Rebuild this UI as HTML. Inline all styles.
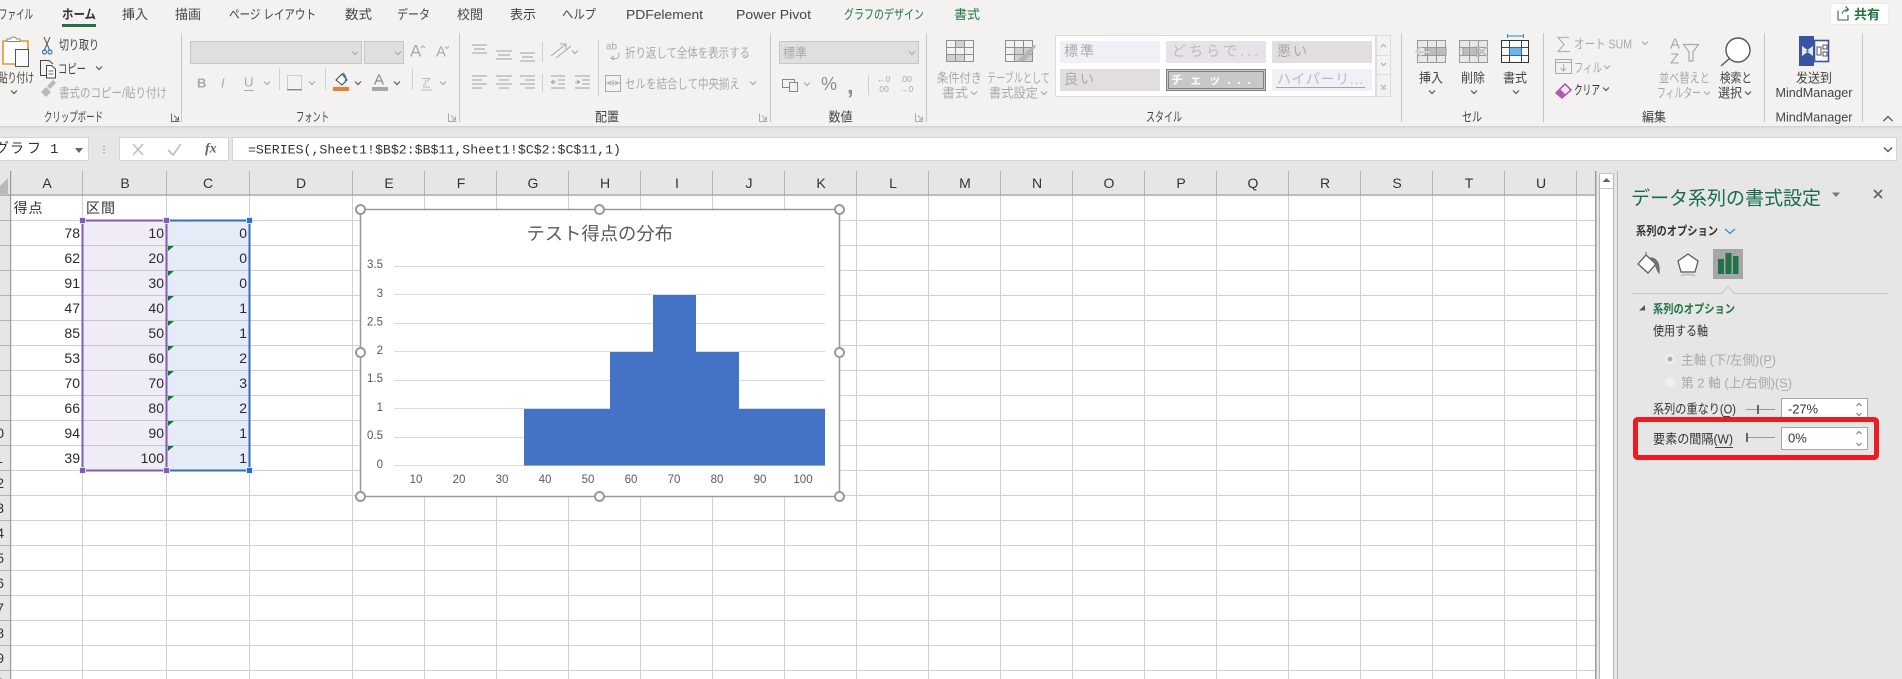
<!DOCTYPE html>
<html lang="ja"><head><meta charset="utf-8"><title>Excel</title>
<style>
html,body{margin:0;padding:0;background:#e6e6e6;overflow:hidden}
svg{display:block;font-size:13px}
text{font-family:"Liberation Sans","Noto Sans CJK JP",sans-serif;dominant-baseline:central;fill:#444}
.g{fill:#a9a9a9}
.d{fill:#333}
.n{font-size:14px;fill:#2a2a2a;text-anchor:end}
.c{font-size:14px;fill:#333;text-anchor:middle}
.y{font-size:11.5px;fill:#595959;text-anchor:end}
.x{font-size:11.5px;fill:#595959;text-anchor:middle}
.gr{fill:#217346}
.hd{fill:#fff;stroke:#999;stroke-width:2}
</style></head><body>
<svg xmlns="http://www.w3.org/2000/svg" width="1902" height="679" viewBox="0 0 1902 679">
<defs>
<path id="ch" d="M-3-1.5L0 1.5L3-1.5" fill="none" stroke="#555" stroke-width="1.2"/>
<path id="cg" d="M-3-1.5L0 1.5L3-1.5" fill="none" stroke="#aaa" stroke-width="1.2"/>
<path id="tri" d="M0 0H6L0 5Z" fill="#0b7d1f"/>
</defs>
<rect width="1902" height="679" fill="#e6e6e6"/>

<!-- ribbon -->
<rect width="1902" height="126" fill="#f3f2f1"/>
<rect y="126" width="1902" height="1" fill="#d4d4d4"/>
<rect y="127" width="1902" height="1" fill="#dcdcdc"/>
<rect y="128" width="1902" height="1" fill="#e1e1e1"/>

<!-- tabs -->
<text x="-1" y="14.5" textLength="34" lengthAdjust="spacingAndGlyphs">ファイル</text>
<text x="62" y="14.5" textLength="34" lengthAdjust="spacingAndGlyphs" font-weight="700" class="d">ホーム</text>
<rect x="62" y="24" width="34" height="3" fill="#217346"/>
<text x="122" y="14.5" textLength="26" lengthAdjust="spacingAndGlyphs">挿入</text>
<text x="175" y="14.5" textLength="26" lengthAdjust="spacingAndGlyphs">描画</text>
<text x="229" y="14.5" textLength="87" lengthAdjust="spacingAndGlyphs">ページ レイアウト</text>
<text x="345" y="14.5" textLength="27" lengthAdjust="spacingAndGlyphs">数式</text>
<text x="397" y="14.5" textLength="33" lengthAdjust="spacingAndGlyphs">データ</text>
<text x="457" y="14.5" textLength="26" lengthAdjust="spacingAndGlyphs">校閲</text>
<text x="510" y="14.5" textLength="26" lengthAdjust="spacingAndGlyphs">表示</text>
<text x="562" y="14.5" textLength="34" lengthAdjust="spacingAndGlyphs">ヘルプ</text>
<text x="626" y="14.5" textLength="77" lengthAdjust="spacingAndGlyphs">PDFelement</text>
<text x="736" y="14.5" textLength="75" lengthAdjust="spacingAndGlyphs">Power Pivot</text>
<text x="844" y="14.5" textLength="80" lengthAdjust="spacingAndGlyphs" class="gr">グラフのデザイン</text>
<text x="954" y="14.5" textLength="26" lengthAdjust="spacingAndGlyphs" class="gr">書式</text>
<!-- share -->
<rect x="1830.5" y="3.5" width="58" height="21" rx="2" fill="#fff" stroke="#ebebeb"/>
<path d="M1838 10.5V20H1848V15M1842 14C1843 11 1845 9.5 1848 9.5M1845.5 6.5L1848.5 9.5L1845.5 12" fill="none" stroke="#217346" stroke-width="1.1"/>
<text x="1854" y="14.5" textLength="26" lengthAdjust="spacingAndGlyphs" class="gr" font-weight="700">共有</text>

<!-- separators -->
<path d="M181.5 33V122M459.5 33V122M770.5 33V122M926.5 33V122M1401.5 33V122M1543.5 33V122M1764.5 33V122M1862.5 33V122" stroke="#c8c6c4" fill="none"/>

<!-- group labels -->
<text x="44" y="117" textLength="59" lengthAdjust="spacingAndGlyphs">クリップボード</text>
<text x="296" y="117" textLength="33" lengthAdjust="spacingAndGlyphs">フォント</text>
<text x="595" y="117" textLength="24" lengthAdjust="spacingAndGlyphs">配置</text>
<text x="828.5" y="117" textLength="24" lengthAdjust="spacingAndGlyphs">数値</text>
<text x="1146" y="117" textLength="36" lengthAdjust="spacingAndGlyphs">スタイル</text>
<text x="1462" y="117" textLength="20" lengthAdjust="spacingAndGlyphs">セル</text>
<text x="1642" y="117" textLength="24" lengthAdjust="spacingAndGlyphs">編集</text>
<text x="1775.5" y="117" textLength="77" lengthAdjust="spacingAndGlyphs">MindManager</text>
<!-- launchers -->
<path d="M171.5 113.5V121.5H179.5M174 115.5L178.5 120M178.5 116.5V120H175" fill="none" stroke="#666"/>
<path d="M448.5 113.5V121.5H456.5M451 115.5L455.5 120M455.5 116.5V120H452" fill="none" stroke="#aaa"/>
<path d="M759.5 113.5V121.5H767.5M762 115.5L766.5 120M766.5 116.5V120H763" fill="none" stroke="#aaa"/>
<path d="M915.5 113.5V121.5H923.5M918 115.5L922.5 120M922.5 116.5V120H919" fill="none" stroke="#aaa"/>
<path d="M1883.5 121L1888 116.5L1892.5 121" fill="none" stroke="#555" stroke-width="1.3"/>

<!-- clipboard -->
<path d="M3 41H28V64H3Z" fill="#fff" stroke="#e8952c" stroke-width="1.6"/>
<path d="M7 41.5V39H10.5C11 36.5 16 36.5 16.5 39H20V41.5Z" fill="#fff" stroke="#888" stroke-width=".9"/>
<rect x="15.5" y="49.5" width="13" height="17" fill="#fbfbfb" stroke="#555"/>
<text x="-1" y="78" textLength="35" lengthAdjust="spacingAndGlyphs">貼り付け</text>
<use href="#ch" x="14" y="92"/>
<path d="M44 37L50 51M50 37L44 51" stroke="#555" fill="none"/>
<circle cx="44.5" cy="52" r="2" fill="none" stroke="#2f7fc1" stroke-width="1.2"/><circle cx="50" cy="52" r="2" fill="none" stroke="#2f7fc1" stroke-width="1.2"/>
<text x="59" y="45" textLength="40" lengthAdjust="spacingAndGlyphs">切り取り</text>
<path d="M46 75.5H40.5V60.5H49L53 64" fill="none" stroke="#444"/><path d="M46.5 65.5H51.5L55.5 69V78H46.5Z" fill="#fff" stroke="#444"/><path d="M48.5 71H53.5M48.5 74H53.5" stroke="#666"/>
<text x="58" y="69" textLength="28" lengthAdjust="spacingAndGlyphs">コピー</text>
<use href="#ch" x="99" y="68"/>
<path d="M41 92L46 87L51 92L46 97ZM47 86L53 80L56 83L50 89Z" fill="#b9b9b9"/>
<text x="59" y="93" textLength="108" lengthAdjust="spacingAndGlyphs" class="g">書式のコピー/貼り付け</text>

<!-- font -->
<rect x="190.5" y="41.5" width="171" height="22" fill="#e1dfdd" stroke="#c8c6c4"/>
<use href="#cg" x="355" y="53"/>
<rect x="364.5" y="41.5" width="39" height="22" fill="#e1dfdd" stroke="#c8c6c4"/>
<use href="#cg" x="398" y="53"/>
<text x="410" y="51" font-size="17" class="g" textLength="11">A</text>
<path d="M421 48L423 46L425 48" fill="none" stroke="#aaa"/>
<text x="436" y="52" font-size="15" class="g" textLength="9">A</text>
<path d="M445 46.5L447 48.5L449 46.5" fill="none" stroke="#aaa"/>
<text x="197" y="83" font-size="13" font-weight="700" class="g">B</text>
<text x="221" y="83" font-size="13" font-style="italic" class="g">I</text>
<text x="244" y="82" font-size="13" class="g">U</text>
<rect x="244" y="90" width="10" height="1" fill="#aaa"/>
<use href="#cg" x="267" y="83"/>
<rect x="287.5" y="75.5" width="14" height="14" fill="none" stroke="#aaa" stroke-dasharray="1 1"/>
<rect x="287" y="89" width="15" height="1.4" fill="#888"/>
<use href="#cg" x="312" y="83"/>
<path d="M279.5 68V90M325.5 68V90M412.5 68V90" stroke="#d2d0ce"/>
<path d="M336 80L342 74L347 80L342 85Z" fill="#fff" stroke="#444"/><path d="M345 82C347 78 345 75 343 73" fill="none" stroke="#2f7fc1" stroke-width="1.4"/>
<rect x="333" y="87" width="16" height="4" fill="#ed7d31"/>
<use href="#ch" x="358" y="83"/>
<text x="374" y="80" font-size="15" style="fill:#888">A</text>
<rect x="372" y="87" width="16" height="4" fill="#a6a6a6"/>
<use href="#ch" x="397" y="83"/>
<text x="421" y="83" font-size="10" class="g">ア</text>
<path d="M421 90H432M423 87H430" stroke="#bbb"/>
<use href="#cg" x="443" y="83"/>

<!-- alignment -->
<path d="M472 45H487M474 49H485M472 53H487M496 51H512M498 55H510M496 59H512M520 53H535M522 57H533M520 61H535" stroke="#a0a0a0" fill="none"/>
<path d="M542.5 42V62M542.5 74V92M598.5 40V96" stroke="#d2d0ce"/>
<path d="M551 56L566 44M556 58L571 46M566 44H560M566 44V50" stroke="#aaa" fill="none"/>
<use href="#cg" x="575" y="52"/>
<path d="M472 76H487M472 80H482M472 84H487M472 88H482M496 76H512M499 80H509M496 84H512M499 88H509M520 76H535M525 80H535M520 84H535M525 88H535" stroke="#a0a0a0" fill="none"/>
<path d="M551 76H565M558 80H565M558 84H565M551 88H565M556 82H551M551 82L554 80M551 82L554 84M575 76H590M582 80H590M582 84H590M575 88H590M575 82H580M580 82L577 80M580 82L577 84" stroke="#a0a0a0" fill="none"/>
<text x="606" y="47" font-size="10" class="g">ab</text>
<path d="M618 53C621 57 617 60 611 58L614 56M611 58L614 60" stroke="#aaa" fill="none"/>
<text x="625" y="53" textLength="125" lengthAdjust="spacingAndGlyphs" class="g">折り返して全体を表示する</text>
<rect x="605.5" y="75.5" width="15" height="16" fill="#f3f2f1" stroke="#aaa"/>
<path d="M605 83H620M613 80V86M608 83L611 81M608 83L611 85M618 83L615 81M618 83L615 85" stroke="#aaa" fill="none"/>
<text x="625" y="84" textLength="115" lengthAdjust="spacingAndGlyphs" class="g">セルを結合して中央揃え</text>
<use href="#cg" x="753" y="83"/>

<!-- number -->
<rect x="779.5" y="41.5" width="139" height="22" fill="#e1dfdd" stroke="#c8c6c4"/>
<text x="783" y="53" textLength="24" lengthAdjust="spacingAndGlyphs" class="g">標準</text>
<use href="#cg" x="912" y="53"/>
<rect x="782.5" y="79.5" width="12" height="8" fill="none" stroke="#888"/><rect x="789.5" y="82.5" width="8" height="9" fill="#f3f2f1" stroke="#888"/>
<use href="#cg" x="807" y="84"/>
<text x="821" y="84" font-size="18" style="fill:#8c8c8c">%</text>
<text x="847" y="86" font-size="24" font-weight="700" style="fill:#8c8c8c">,</text>
<path d="M868.5 75V95" stroke="#d2d0ce"/>
<text x="877" y="79" font-size="8.5" class="g">←0</text><text x="877" y="89" font-size="8.5" class="g">.00</text>
<text x="900" y="79" font-size="8.5" class="g">.00</text><text x="900" y="89" font-size="8.5" class="g">→0</text>

<!-- styles -->
<g fill="#d0d0d0" stroke="#8f8f8f">
<rect x="946.5" y="40.5" width="27" height="21" fill="#f3f2f1"/>
<rect x="955.5" y="40.5" width="9" height="7"/><rect x="946.5" y="54.5" width="18" height="7"/><rect x="955.5" y="47.5" width="18" height="7" fill="#f3f2f1"/>
<path d="M946.5 47.5H973.5M946.5 54.5H973.5M955.5 40.5V61.5M964.5 40.5V61.5" fill="none"/>
<rect x="1005.5" y="40.5" width="27" height="21" fill="#f3f2f1"/>
<rect x="1014.5" y="47.5" width="18" height="14"/>
<path d="M1005.5 47.5H1032.5M1005.5 54.5H1032.5M1014.5 40.5V61.5M1023.5 40.5V61.5" fill="none"/>
</g>
<path d="M1018 60L1022 56L1034 45L1036 46L1026 60L1020 62Z" fill="#b5b5b5"/>
<text x="937" y="78" textLength="45" lengthAdjust="spacingAndGlyphs" class="g">条件付き</text>
<text x="942" y="93" textLength="26" lengthAdjust="spacingAndGlyphs" class="g">書式</text><use href="#cg" x="974" y="93"/>
<text x="987" y="78" textLength="63" lengthAdjust="spacingAndGlyphs" class="g">テーブルとして</text>
<text x="989" y="93" textLength="49" lengthAdjust="spacingAndGlyphs" class="g">書式設定</text><use href="#cg" x="1044" y="93"/>
<rect x="1055.5" y="35.5" width="320" height="61" fill="#fff" stroke="#dcdcdc"/>
<rect x="1060" y="41" width="100" height="22" fill="#f3eff7"/>
<rect x="1166" y="41" width="100" height="22" fill="#e6e2e8"/>
<rect x="1272" y="41" width="100" height="22" fill="#e1dde1"/>
<rect x="1060" y="69" width="100" height="22" fill="#e1dde1"/>
<rect x="1166.5" y="69.5" width="99" height="21" fill="#c8c8c8" stroke="#808080" stroke-width="1"/>
<rect x="1168.5" y="71.5" width="95" height="17" fill="#c8c8c8" stroke="#808080" stroke-width="1"/>
<rect x="1272" y="69" width="100" height="22" fill="#f3eff7"/>
<text x="1064" y="51" textLength="30" lengthAdjust="spacing" font-size="14" class="g">標準</text>
<text x="1172" y="51" textLength="86" lengthAdjust="spacing" font-size="14" style="fill:#bbb">どちらで...</text>
<text x="1277" y="51" textLength="30" lengthAdjust="spacing" font-size="14" class="g">悪い</text>
<text x="1064" y="79" textLength="30" lengthAdjust="spacing" font-size="14" class="g">良い</text>
<text x="1171" y="80" textLength="80" lengthAdjust="spacing" font-size="12" font-weight="700" style="fill:#fff">チェッ...</text>
<text x="1277" y="79" textLength="86" lengthAdjust="spacing" font-size="14" style="fill:#bbb">ハイパーリ...</text>
<rect x="1276" y="87" width="89" height="1" fill="#a89fb0"/>
<g fill="#f3f2f1" stroke="#dcdcdc"><rect x="1376.5" y="35.5" width="14" height="20"/><rect x="1376.5" y="55.5" width="14" height="19"/><rect x="1376.5" y="74.5" width="14" height="22"/></g>
<path d="M1381 47L1383.5 44.5L1386 47M1381 63L1383.5 65.5L1386 63M1381 85L1383.5 87.5L1386 85M1381 89H1386" fill="none" stroke="#aaa"/>

<!-- cells -->
<g stroke="#999" fill="#e8e8e8">
<rect x="1417.5" y="40.5" width="28" height="22"/>
<rect x="1425" y="47.5" width="21" height="8" fill="#bdbdbd"/>
<path d="M1417.5 47.5H1445.5M1417.5 55.5H1445.5M1427.5 40.5V62.5M1436.5 40.5V62.5" fill="none"/>
<rect x="1459.5" y="40.5" width="28" height="22"/>
<rect x="1463" y="47.5" width="14" height="8" fill="#bdbdbd"/>
<path d="M1459.5 47.5H1487.5M1459.5 55.5H1487.5M1469.5 40.5V62.5M1478.5 40.5V62.5" fill="none"/>
</g>
<path d="M1430 52H1417M1421 47L1416 51.5L1421 56" fill="none" stroke="#d0d0d0" stroke-width="2"/>
<path d="M1476 46L1488 57M1488 46L1476 57" stroke="#bbb" stroke-width="1.6"/>
<rect x="1501.5" y="40.5" width="27" height="22" fill="#fafafa" stroke="#333"/>
<rect x="1509.5" y="47.5" width="12" height="8" fill="#74b0e6" stroke="#1b6db8"/>
<path d="M1501.5 47.5H1509.5M1521.5 47.5H1528.5M1501.5 55.5H1509.5M1521.5 55.5H1528.5M1509.5 40.5V47.5M1509.5 55.5V62.5M1521.5 40.5V47.5M1521.5 55.5V62.5" fill="none" stroke="#444"/>
<path d="M1507.5 36H1523.5M1507.5 34V38M1523.5 34V38" stroke="#1f86d1" fill="none"/>
<text x="1419" y="78" textLength="24" lengthAdjust="spacingAndGlyphs">挿入</text><use href="#ch" x="1432" y="92"/>
<text x="1461" y="78" textLength="24" lengthAdjust="spacingAndGlyphs">削除</text><use href="#ch" x="1474" y="92"/>
<text x="1503" y="78" textLength="24" lengthAdjust="spacingAndGlyphs">書式</text><use href="#ch" x="1516" y="92"/>

<!-- edit -->
<path d="M1569 37.5H1558L1564 44.5L1558 51.5H1570" fill="none" stroke="#b5b5b5" stroke-width="1.3"/>
<text x="1574" y="44" textLength="58" lengthAdjust="spacingAndGlyphs" class="g">オート SUM</text><use href="#cg" x="1645" y="43"/>
<rect x="1555.5" y="59.5" width="16" height="14" fill="#f3f2f1" stroke="#aaa"/><path d="M1555.5 62.5H1571.5M1563.5 64V71M1560.5 68L1563.5 71L1566.5 68" stroke="#aaa" fill="none"/>
<text x="1574" y="68" textLength="28" lengthAdjust="spacingAndGlyphs" class="g">フィル</text><use href="#cg" x="1607" y="67"/>
<path d="M1556 93L1565 84L1571 90L1562 98Z" fill="#f3e6f4" stroke="#a548a6" stroke-width="1.4"/><path d="M1556 93L1560 89L1565 94L1562 98Z" fill="#b45ab5"/>
<text x="1574" y="90" textLength="26" lengthAdjust="spacingAndGlyphs" class="d">クリア</text><use href="#ch" x="1606" y="89"/>
<text x="1670" y="44" font-size="15" class="g">A</text><text x="1670" y="59" font-size="15" class="g">Z</text>
<path d="M1683.5 44.5H1698.5L1693 52V61L1689 61V52Z" fill="none" stroke="#aaa" stroke-width="1.2"/>
<text x="1659" y="78" textLength="51" lengthAdjust="spacingAndGlyphs" class="g">並べ替えと</text>
<text x="1657" y="93" textLength="44" lengthAdjust="spacingAndGlyphs" class="g">フィルター</text><use href="#cg" x="1707" y="93"/>
<circle cx="1738" cy="50" r="12" fill="#fff" stroke="#555" stroke-width="1.4"/>
<path d="M1729.5 58.5L1721 66" stroke="#555" stroke-width="1.4"/>
<text x="1720" y="78" textLength="32" lengthAdjust="spacingAndGlyphs">検索と</text>
<text x="1718" y="93" textLength="24" lengthAdjust="spacingAndGlyphs">選択</text><use href="#ch" x="1748" y="93"/>

<!-- mindmanager -->
<rect x="1799" y="36" width="15" height="30" fill="#3a53a4"/>
<rect x="1814.5" y="40.5" width="14" height="21" fill="#fff" stroke="#3a53a4" stroke-width="1.6"/>
<path d="M1802 46L1809 51L1802 56ZM1813 46L1806 51L1813 56Z" fill="#e6e6e6"/>
<rect x="1817" y="47" width="4" height="8" fill="none" stroke="#555"/><rect x="1823" y="45" width="4" height="4" fill="none" stroke="#555"/><rect x="1823" y="52" width="4" height="4" fill="none" stroke="#555"/>
<text x="1796" y="78" textLength="36" lengthAdjust="spacingAndGlyphs">发送到</text>
<text x="1775.5" y="92.5" textLength="77" lengthAdjust="spacingAndGlyphs">MindManager</text>

<!-- formula bar -->
<rect x="-2" y="137.5" width="90.5" height="23" fill="#fff" stroke="#d4d4d4"/>
<text x="-5 10 27 42 50" y="150" font-size="14" style="font-family:'Liberation Mono','Noto Sans CJK JP',monospace;fill:#333">グラフ 1</text>
<path d="M75 148H83L79 153Z" fill="#666"/>
<path d="M104 146V147M104 149V150M104 152V153" stroke="#999" stroke-width="1.6"/>
<rect x="119.5" y="137.5" width="109" height="23" fill="#fff" stroke="#d4d4d4"/>
<path d="M133 144L143 155M143 144L133 155" stroke="#bdbdbd" stroke-width="1.5"/>
<path d="M168 150L173 155L181 144" fill="none" stroke="#bdbdbd" stroke-width="1.6"/>
<text x="205" y="149" font-size="14" font-style="italic" font-weight="700" style="font-family:'Liberation Serif',serif;fill:#666">fx</text>
<rect x="232.5" y="137.5" width="1664" height="23" fill="#fff" stroke="#d4d4d4"/>
<text x="248" y="150" font-size="13.2" textLength="373" lengthAdjust="spacingAndGlyphs" style="font-family:'Liberation Mono',monospace;fill:#333">=SERIES(,Sheet1!$B$2:$B$11,Sheet1!$C$2:$C$11,1)</text>
<path d="M1884 147.5L1888 151.5L1892 147.5" fill="none" stroke="#555" stroke-width="1.4"/>

<!-- column headers -->
<rect x="0" y="171" width="1595" height="24" fill="#e6e6e6"/>
<path d="M8 178V194H0V186Z" fill="#b8b8b8"/>
<path d="M10.5 171V195M82.5 171V195M166.5 171V195M249.5 171V195M352.5 171V195M424.5 171V195M496.5 171V195M568.5 171V195M640.5 171V195M712.5 171V195M784.5 171V195M856.5 171V195M928.5 171V195M1000.5 171V195M1072.5 171V195M1144.5 171V195M1216.5 171V195M1288.5 171V195M1360.5 171V195M1432.5 171V195M1504.5 171V195M1576.5 171V195" stroke="#b4b4b4"/>
<g>
<text class="c" x="47" y="183">A</text><text class="c" x="125" y="183">B</text><text class="c" x="208" y="183">C</text><text class="c" x="301" y="183">D</text><text class="c" x="389" y="183">E</text><text class="c" x="461" y="183">F</text><text class="c" x="533" y="183">G</text><text class="c" x="605" y="183">H</text><text class="c" x="677" y="183">I</text><text class="c" x="749" y="183">J</text><text class="c" x="821" y="183">K</text><text class="c" x="893" y="183">L</text><text class="c" x="965" y="183">M</text><text class="c" x="1037" y="183">N</text><text class="c" x="1109" y="183">O</text><text class="c" x="1181" y="183">P</text><text class="c" x="1253" y="183">Q</text><text class="c" x="1325" y="183">R</text><text class="c" x="1397" y="183">S</text><text class="c" x="1469" y="183">T</text><text class="c" x="1541" y="183">U</text>
</g>

<!-- grid -->
<rect x="11" y="195" width="1584" height="484" fill="#fff"/>
<path d="M82.5 195V679M166.5 195V679M249.5 195V679M352.5 195V679M424.5 195V679M496.5 195V679M568.5 195V679M640.5 195V679M712.5 195V679M784.5 195V679M856.5 195V679M928.5 195V679M1000.5 195V679M1072.5 195V679M1144.5 195V679M1216.5 195V679M1288.5 195V679M1360.5 195V679M1432.5 195V679M1504.5 195V679M1576.5 195V679M11 220.5H1595M11 245.5H1595M11 270.5H1595M11 295.5H1595M11 320.5H1595M11 345.5H1595M11 370.5H1595M11 395.5H1595M11 420.5H1595M11 445.5H1595M11 470.5H1595M11 495.5H1595M11 520.5H1595M11 545.5H1595M11 570.5H1595M11 595.5H1595M11 620.5H1595M11 645.5H1595M11 670.5H1595" stroke="#d0d0d0" fill="none"/>
<path d="M0 220.5H10M0 245.5H10M0 270.5H10M0 295.5H10M0 320.5H10M0 345.5H10M0 370.5H10M0 395.5H10M0 420.5H10M0 445.5H10M0 470.5H10M0 495.5H10M0 520.5H10M0 545.5H10M0 570.5H10M0 595.5H10M0 620.5H10M0 645.5H10M0 670.5H10" stroke="#b4b4b4" fill="none"/>
<rect x="0" y="194.5" width="1596" height="1.2" fill="#9c9c9c"/>
<rect x="10" y="171" width="1.2" height="508" fill="#9c9c9c"/>
<rect x="1595" y="171" width="1.4" height="508" fill="#9a9a9a"/>
<!-- row header digits (clipped at left edge) -->
<g>
<text x="-11.5" y="433" style="font-size:14px;fill:#333">10</text><text x="-11.5" y="458" style="font-size:14px;fill:#333">11</text><text x="-11.5" y="483" style="font-size:14px;fill:#333">12</text><text x="-11.5" y="508" style="font-size:14px;fill:#333">13</text><text x="-11.5" y="533" style="font-size:14px;fill:#333">14</text><text x="-11.5" y="558" style="font-size:14px;fill:#333">15</text><text x="-11.5" y="583" style="font-size:14px;fill:#333">16</text><text x="-11.5" y="608" style="font-size:14px;fill:#333">17</text><text x="-11.5" y="633" style="font-size:14px;fill:#333">18</text><text x="-11.5" y="658" style="font-size:14px;fill:#333">19</text><text x="-11.5" y="683" style="font-size:14px;fill:#333">20</text>
</g>

<!-- selection fills -->
<rect x="83" y="220" width="83" height="250" fill="#f0ecf6"/>
<rect x="167" y="220" width="82" height="250" fill="#e6ecf7"/>
<path d="M83 245.5H166M83 270.5H166M83 295.5H166M83 320.5H166M83 345.5H166M83 370.5H166M83 395.5H166M83 420.5H166M83 445.5H166" stroke="#c6c4cf"/>
<path d="M167 245.5H249M167 270.5H249M167 295.5H249M167 320.5H249M167 345.5H249M167 370.5H249M167 395.5H249M167 420.5H249M167 445.5H249" stroke="#c4cad5"/>
<rect x="82.5" y="220.5" width="84" height="250" fill="none" stroke="#7f5cb5" stroke-width="2"/>
<rect x="166.5" y="220.5" width="83" height="250" fill="none" stroke="#2f6ec6" stroke-width="2"/>
<path d="M82.5 220V471" stroke="#7f5cb5" stroke-width="2"/>
<path d="M166.5 220V471" stroke="#7f5cb5" stroke-width="2"/>
<g fill="#7f5cb5" stroke="#fff" stroke-width=".7"><rect x="79.5" y="217.5" width="6" height="6"/><rect x="163.5" y="217.5" width="6" height="6"/><rect x="79.5" y="467.5" width="6" height="6"/><rect x="163.5" y="467.5" width="6" height="6"/></g>
<g fill="#2f6ec6" stroke="#fff" stroke-width=".7"><rect x="246.5" y="217.5" width="6" height="6"/><rect x="246.5" y="467.5" width="6" height="6"/></g>
<g><use href="#tri" x="168" y="246"/><use href="#tri" x="168" y="271"/><use href="#tri" x="168" y="296"/><use href="#tri" x="168" y="321"/><use href="#tri" x="168" y="346"/><use href="#tri" x="168" y="371"/><use href="#tri" x="168" y="396"/><use href="#tri" x="168" y="421"/><use href="#tri" x="168" y="446"/></g>

<!-- cells -->
<text x="13.5" y="208" textLength="29" lengthAdjust="spacing" font-size="14" class="d">得点</text>
<text x="86" y="208" textLength="29" lengthAdjust="spacing" font-size="14" class="d">区間</text>
<g>
<text class="n" x="80" y="233">78</text><text class="n" x="164" y="233">10</text><text class="n" x="247" y="233">0</text>
<text class="n" x="80" y="258">62</text><text class="n" x="164" y="258">20</text><text class="n" x="247" y="258">0</text>
<text class="n" x="80" y="283">91</text><text class="n" x="164" y="283">30</text><text class="n" x="247" y="283">0</text>
<text class="n" x="80" y="308">47</text><text class="n" x="164" y="308">40</text><text class="n" x="247" y="308">1</text>
<text class="n" x="80" y="333">85</text><text class="n" x="164" y="333">50</text><text class="n" x="247" y="333">1</text>
<text class="n" x="80" y="358">53</text><text class="n" x="164" y="358">60</text><text class="n" x="247" y="358">2</text>
<text class="n" x="80" y="383">70</text><text class="n" x="164" y="383">70</text><text class="n" x="247" y="383">3</text>
<text class="n" x="80" y="408">66</text><text class="n" x="164" y="408">80</text><text class="n" x="247" y="408">2</text>
<text class="n" x="80" y="433">94</text><text class="n" x="164" y="433">90</text><text class="n" x="247" y="433">1</text>
<text class="n" x="80" y="458">39</text><text class="n" x="164" y="458">100</text><text class="n" x="247" y="458">1</text>
</g>

<!-- chart -->
<rect x="360.5" y="209.5" width="479" height="287" fill="#fff" stroke="#999" stroke-width="1.5"/>
<text x="526.5" y="234" textLength="146.5" lengthAdjust="spacingAndGlyphs" font-size="18" style="fill:#595959">テスト得点の分布</text>
<path d="M394 266.5H825M394 294.5H825M394 323.5H825M394 351.5H825M394 380.5H825M394 408.5H825M394 437.5H825M394 465.5H825" stroke="#d9d9d9"/>
<path d="M524 465.5V409H610V352H653V295H696V352H739V409H825V465.5Z" fill="#4472c4"/>
<text class="y" x="383" y="265">3.5</text><text class="y" x="383" y="294">3</text><text class="y" x="383" y="322.5">2.5</text><text class="y" x="383" y="351">2</text><text class="y" x="383" y="379">1.5</text><text class="y" x="383" y="408">1</text><text class="y" x="383" y="436">0.5</text><text class="y" x="383" y="465">0</text>
<text class="x" x="416" y="480">10</text><text class="x" x="459" y="480">20</text><text class="x" x="502" y="480">30</text><text class="x" x="545" y="480">40</text><text class="x" x="588" y="480">50</text><text class="x" x="631" y="480">60</text><text class="x" x="674" y="480">70</text><text class="x" x="717" y="480">80</text><text class="x" x="760" y="480">90</text><text class="x" x="803" y="480">100</text>
<circle class="hd" cx="360.5" cy="209.5" r="4.5"/><circle class="hd" cx="599.5" cy="209.5" r="4.5"/><circle class="hd" cx="839.5" cy="209.5" r="4.5"/><circle class="hd" cx="360.5" cy="352.5" r="4.5"/><circle class="hd" cx="839.5" cy="352.5" r="4.5"/><circle class="hd" cx="360.5" cy="496.5" r="4.5"/><circle class="hd" cx="599.5" cy="496.5" r="4.5"/><circle class="hd" cx="839.5" cy="496.5" r="4.5"/>

<!-- scrollbar -->
<rect x="1599" y="173" width="15" height="506" fill="#fff"/>
<path d="M1599.5 173V679M1613.5 173V679M1617.5 171V679" stroke="#b4b4b4" fill="none"/>
<path d="M1599 173.5H1614M1599 188.5H1614" stroke="#c8c8c8"/>
<path d="M1602.5 182L1606.5 178L1610.5 182Z" fill="#666"/>

<!-- panel -->
<text x="1631" y="199" textLength="190" lengthAdjust="spacingAndGlyphs" font-size="19" style="fill:#17694a">データ系列の書式設定</text>
<path d="M1832 192.5H1840L1836 197Z" fill="#777"/>
<path d="M1874 190L1882 198M1882 190L1874 198" stroke="#666" stroke-width="1.8"/>
<text x="1636" y="231" textLength="82" lengthAdjust="spacingAndGlyphs" font-size="12" font-weight="700" class="d">系列のオプション</text>
<path d="M1725 229L1730 233.5L1735 229" fill="none" stroke="#2f86c9" stroke-width="1.2"/>
<path d="M1638 264L1646 255L1656 264L1648 273Z" fill="#fff" stroke="#555" stroke-width="1.2"/>
<path d="M1646 256V252M1651 258C1656 258 1660 263 1659 273C1657 270 1656 267 1655 264Z" fill="#777" stroke="#666"/>
<path d="M1688 254L1698 261L1695 272H1681L1678 261Z" fill="#fff" stroke="#555" stroke-width="1.2"/>
<path d="M1681 276C1684 274 1692 274 1695 276" fill="none" stroke="#bbb" stroke-width="1.4"/>
<rect x="1713" y="249" width="30" height="30" fill="#a6a6a6"/>
<rect x="1718" y="259" width="6" height="15" fill="#217346"/><rect x="1725.5" y="253" width="6" height="21" fill="#217346"/><rect x="1733" y="256" width="5.5" height="18" fill="#217346"/>
<path d="M1631 293.5H1722L1728 286L1734 293.5H1888" fill="none" stroke="#c8c8c8"/>
<path d="M1639 310.5H1645V305Z" fill="#555"/>
<text x="1653" y="309" textLength="82" lengthAdjust="spacingAndGlyphs" font-size="12" font-weight="700" class="gr">系列のオプション</text>
<text x="1653" y="331" textLength="55" lengthAdjust="spacingAndGlyphs" class="d">使用する軸</text>
<circle cx="1670" cy="359" r="5" fill="#f0f0f0"/><circle cx="1670" cy="359" r="2.5" fill="#b0b0b0"/>
<text x="1681" y="360" textLength="95" lengthAdjust="spacingAndGlyphs" class="g">主軸 (下/左側)(P)</text>
<rect x="1766" y="367" width="6" height="1" fill="#b0b0b0"/>
<circle cx="1670" cy="382" r="5" fill="#f0f0f0"/>
<text x="1681" y="383" textLength="111" lengthAdjust="spacingAndGlyphs" class="g">第 2 軸 (上/右側)(S)</text>
<rect x="1781" y="390" width="7" height="1" fill="#b0b0b0"/>
<text x="1653" y="409" textLength="83" lengthAdjust="spacingAndGlyphs" class="d">系列の重なり(O)</text>
<rect x="1723" y="416" width="7" height="1" fill="#444"/>
<path d="M1746 409.5H1775" stroke="#999"/><rect x="1757" y="405" width="2" height="9" fill="#666"/>
<rect x="1781.5" y="398.5" width="86" height="26" fill="#fff" stroke="#a6a6a6"/>
<text x="1788" y="409" font-size="13" textLength="30" lengthAdjust="spacing" class="d">-27%</text>
<path d="M1856.5 406L1859 403.500L1861.5 406M1856.5 413L1859 415.5L1861.5 413" fill="none" stroke="#777"/>
<rect x="1635.5" y="419.5" width="241" height="38" rx="2" fill="#e6e6e6" stroke="#ed1c24" stroke-width="5"/>
<text x="1653" y="439" textLength="80" lengthAdjust="spacingAndGlyphs" class="d">要素の間隔(W)</text>
<rect x="1715" y="447" width="18" height="1" fill="#444"/>
<path d="M1746 437.5H1775" stroke="#999"/><rect x="1746" y="433" width="2" height="9" fill="#666"/>
<rect x="1781.5" y="427.5" width="86" height="22" fill="#fff" stroke="#a6a6a6"/>
<text x="1788" y="438" font-size="13" class="d">0%</text>
<path d="M1856.5 434L1859 431.5L1861.5 434M1856.5 443L1859 445.5L1861.5 443" fill="none" stroke="#777"/>
</svg>
</body></html>
